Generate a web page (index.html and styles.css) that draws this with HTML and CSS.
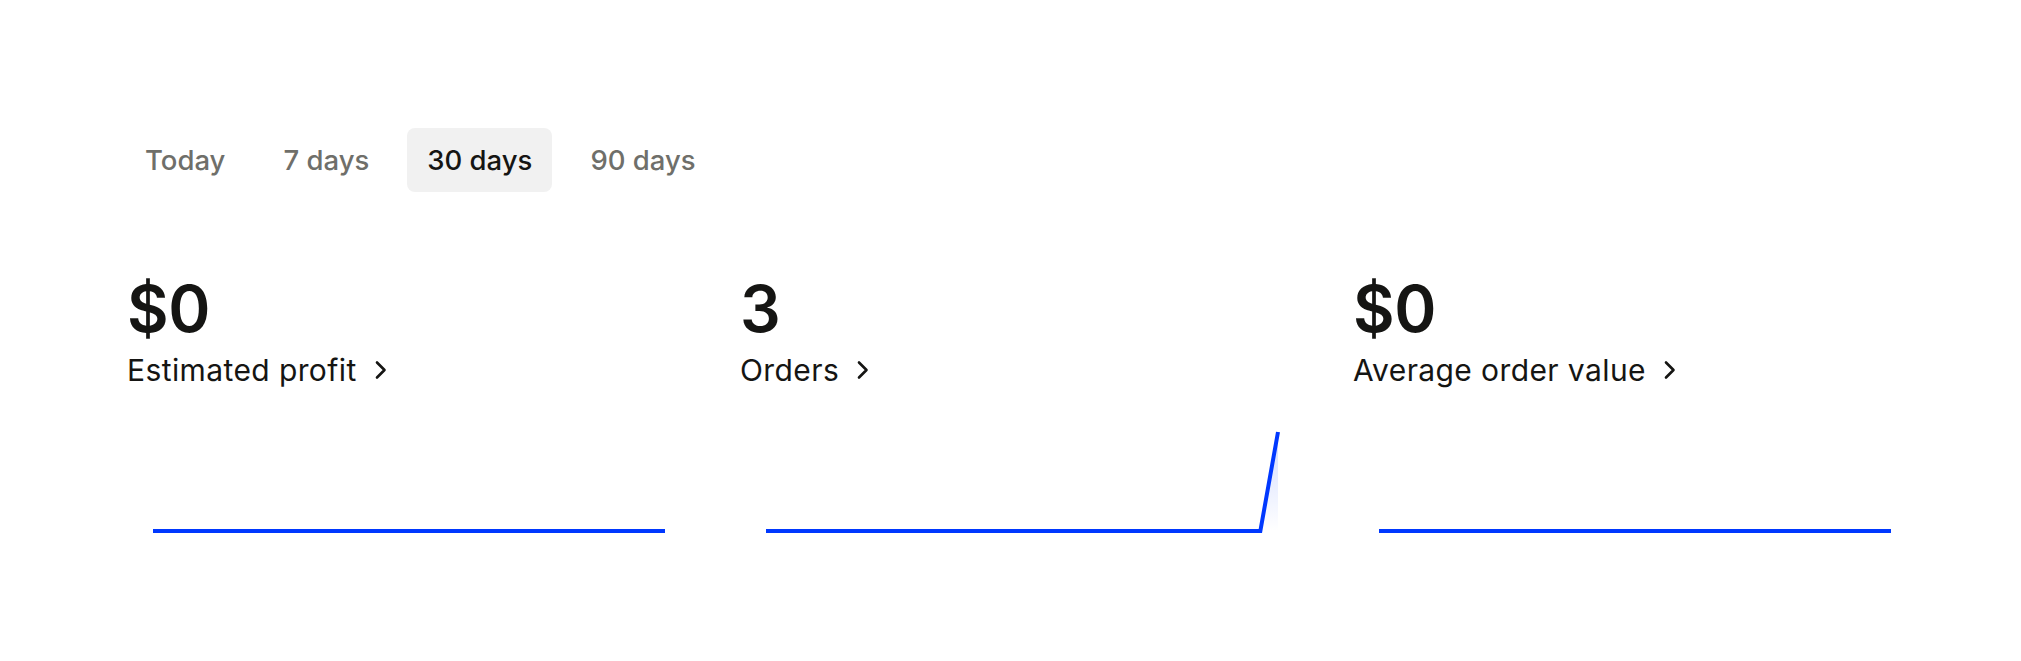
FILE: index.html
```html
<!DOCTYPE html>
<html lang="en">
<head>
<meta charset="utf-8">
<title>Analytics</title>
<link rel="stylesheet" href="styles.css">
</head>
<body>
<main class="page">
  <nav class="tabs">
    <button class="tab">Today</button>
    <button class="tab">7 days</button>
    <button class="tab tab-active">30 days</button>
    <button class="tab">90 days</button>
  </nav>
  <section class="stats">
    <div class="stat">
      <div class="stat-value">$0</div>
      <a class="stat-label">Estimated profit
        <svg class="chev" width="14" height="20" viewBox="0 0 14 20"><path d="M3 2.5 L10.5 10 L3 17.5" fill="none" stroke="currentColor" stroke-width="2.6" stroke-linecap="round" stroke-linejoin="round"/></svg>
      </a>
      <svg class="chart" width="512" height="110" viewBox="0 0 512 110">
        <polyline points="0,103 512,103" fill="none" stroke="#0038ff" stroke-width="4"/>
      </svg>
    </div>
    <div class="stat">
      <div class="stat-value">3</div>
      <a class="stat-label">Orders
        <svg class="chev" width="14" height="20" viewBox="0 0 14 20"><path d="M3 2.5 L10.5 10 L3 17.5" fill="none" stroke="currentColor" stroke-width="2.6" stroke-linecap="round" stroke-linejoin="round"/></svg>
      </a>
      <svg class="chart" width="512" height="110" viewBox="0 0 512 110">
        <defs>
          <linearGradient id="fill2" x1="0" y1="0" x2="0" y2="1">
            <stop offset="0" stop-color="#0038ff" stop-opacity="0.18"/>
            <stop offset="1" stop-color="#0038ff" stop-opacity="0"/>
          </linearGradient>
        </defs>
        <polygon points="494.34,103 512,4 512,103" fill="url(#fill2)"/>
        <polyline points="0,103 494.34,103 512,4" fill="none" stroke="#0038ff" stroke-width="4"/>
      </svg>
    </div>
    <div class="stat">
      <div class="stat-value">$0</div>
      <a class="stat-label">Average order value
        <svg class="chev" width="14" height="20" viewBox="0 0 14 20"><path d="M3 2.5 L10.5 10 L3 17.5" fill="none" stroke="currentColor" stroke-width="2.6" stroke-linecap="round" stroke-linejoin="round"/></svg>
      </a>
      <svg class="chart" width="512" height="110" viewBox="0 0 512 110">
        <polyline points="0,103 512,103" fill="none" stroke="#0038ff" stroke-width="4"/>
      </svg>
    </div>
  </section>
</main>
</body>
</html>
```
FILE: styles.css
```css
* { box-sizing: border-box; }
html, body { margin: 0; padding: 0; background: #ffffff; }
body {
  font-family: Inter, "Noto Sans", "Liberation Sans", sans-serif;
  color: #151513;
}
.page {
  padding: 128px 0 0 125px;
}
.tabs {
  display: flex;
  gap: 18px;
}
.tab {
  font-family: inherit;
  font-size: 27.5px;
  font-weight: 500;
  color: #6f6f6a;
  background: transparent;
  border: none;
  border-radius: 8px;
  height: 64px;
  padding: 0 20px;
  margin: 0;
  display: flex;
  align-items: center;
}
.tab-active {
  background: #f1f1f1;
  color: #151513;
}
.stats {
  display: grid;
  grid-template-columns: repeat(3, 613px);
  margin-top: 85px;
  padding-left: 2px;
}
.stat {
  display: flex;
  flex-direction: column;
  align-items: flex-start;
}
.stat-value {
  font-size: 64px;
  font-weight: 600;
  line-height: 64px;
  letter-spacing: -0.5px;
}
.stat-label {
  margin-top: 11px;
  font-size: 30px;
  line-height: 36px;
  font-weight: 400;
  letter-spacing: 0.4px;
  display: flex;
  align-items: center;
  gap: 17px;
}
.chev { display: block; }
.chart {
  display: block;
  margin-top: 40px;
  margin-left: 26px;
  overflow: visible;
}
```
